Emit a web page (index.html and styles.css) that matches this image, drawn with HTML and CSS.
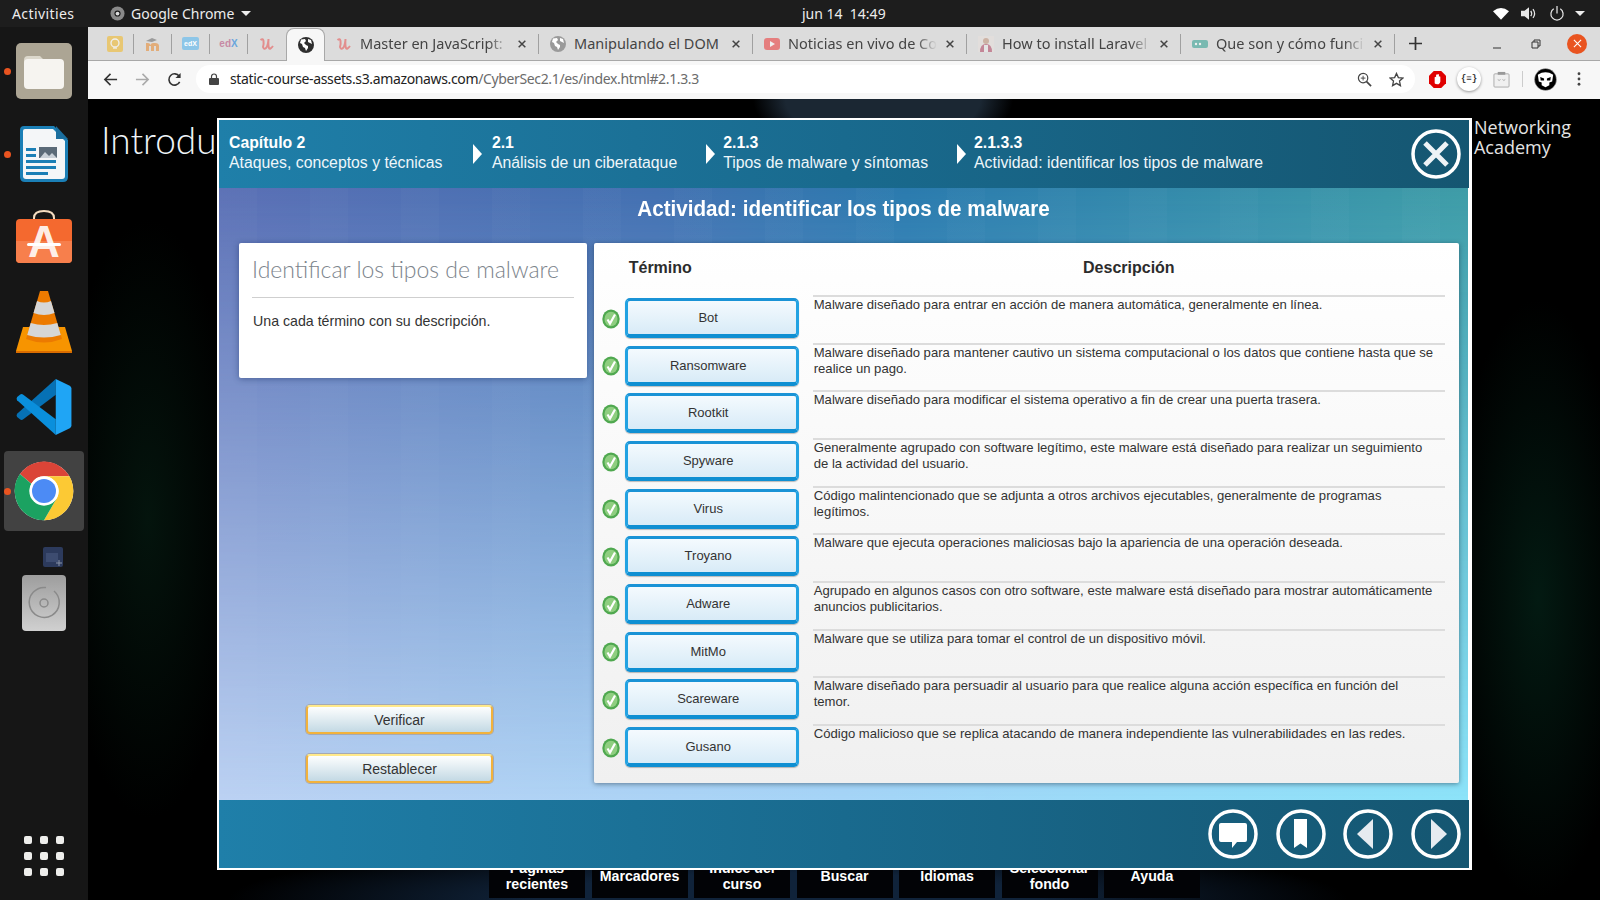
FILE: index.html
```html
<!DOCTYPE html>
<html lang="es">
<head>
<meta charset="utf-8">
<title>Actividad: identificar los tipos de malware</title>
<link rel="stylesheet" href="styles.css">
</head>
<body>
<svg class="defs" width="0" height="0" aria-hidden="true">
  <symbol id="globe" viewBox="0 0 16 16"><circle cx="8" cy="8" r="8" fill="currentColor"/><path d="M3 2.500 7 2l1 2-2 2 2 2 2 1v2l-2 3-1-3-2-1-1-3-2-1zM10 2l3 1 1 4-2-1-2-1z" fill="#fff"/></symbol>
  <symbol id="udemy" viewBox="0 0 16 16"><path d="M1.500 4Q4 2 4.500 5T4 11q1 3 3 1t2.500-9q-.5 7 .5 9t4-2" fill="none" stroke="#e8504f" stroke-width="2"/></symbol>
  <symbol id="x" viewBox="0 0 12 12"><path d="M2 2l8 8M10 2l-8 8" stroke="#444" stroke-width="1.800"/></symbol>
  <symbol id="check" viewBox="0 0 18 20"><ellipse cx="9" cy="10" rx="8.700" ry="9.600" fill="#4fa84f"/><ellipse cx="9" cy="10" rx="6.500" ry="7.300" fill="#8fce80"/><path d="M5.500 10.500l2.500 4 5-9" fill="none" stroke="#fff" stroke-width="2.200"/></symbol>
</svg>

<header class="topbar">
  <span class="activities">Activities</span>
  <span class="app-menu">
    <svg class="app-icon" viewBox="0 0 16 16"><circle cx="8" cy="8" r="7.500" fill="#8a8a8a"/><circle cx="8" cy="8" r="3.300" fill="#1d1d1d"/><circle cx="8" cy="8" r="2" fill="#ddd"/></svg>
    Google Chrome
    <span class="caret"></span>
  </span>
  <time class="clock">jun 14&nbsp; 14:49</time>
  <div class="tray">
    <svg class="tray-icon" viewBox="0 0 18 14"><path d="M0 4.500Q9-3 18 4.500L9 14z" fill="#fff"/></svg>
    <svg class="tray-icon" viewBox="0 0 18 16"><path d="M0 5h4l5-4v14l-5-4H0z" fill="#e8e8e8"/><path d="M11 5q2 3 0 6M13.500 3q3.500 5 0 10" fill="none" stroke="#e8e8e8" stroke-width="1.400"/></svg>
    <svg class="tray-icon" viewBox="0 0 16 16"><path d="M4.500 3a6.500 6.500 0 1 0 7 0M8 0v8" fill="none" stroke="#e8e8e8" stroke-width="1.300"/></svg>
    <span class="caret tray-caret"></span>
  </div>
</header>

<div class="desktop">
  <nav class="dock">
    <div class="dock-item"><span class="dot"></span>
      <svg class="dock-icon" viewBox="0 0 56 56"><rect width="56" height="56" rx="5" fill="#aca594"/><path d="M8 17q0-4 4-4h12l5 5h16v6H8z" fill="#dcd8cc"/><rect x="8" y="16" width="40" height="30" rx="4" fill="#f6f4f0"/></svg>
    </div>
    <div class="dock-item"><span class="dot"></span>
      <svg class="dock-icon" viewBox="0 0 56 56"><path d="M8 0h30l14 14v37q0 5-5 5H9q-5 0-5-5V4q0-4 4-4z" fill="#1b7fb6"/><path d="M9 3h28l12 12v35q0 3-3 3H10q-3 0-3-3V5q0-2 2-2z" fill="#f4f6f8"/><path d="M40 0l12 13H40z" fill="#1a6e9e"/><path d="M10 22h10v3H10zM10 28h10v3H10zM10 34h30v3H10zM10 40h30v3H10zM10 46h22v3H10z" fill="#1b7fb6"/><rect x="23" y="21" width="18" height="11" fill="#5a6a78"/><path d="M24 32l5-6 4 4 3-3 5 5z" fill="#c8d0d8"/></svg>
    </div>
    <div class="dock-item">
      <svg class="dock-icon" viewBox="0 0 56 56"><path d="M18 10V8q0-7 10-7t10 7v2" fill="none" stroke="#f3dcc0" stroke-width="2"/><rect y="9" width="56" height="44" rx="4" fill="#f4692f"/><path d="M0 31h56v18q0 4-4 4H4q-4 0-4-4z" fill="#f77f4c"/><text x="28" y="47" class="store-letter">A</text><rect x="11" y="33" width="34" height="3" rx="1.500" fill="#fff"/></svg>
    </div>
    <div class="dock-item">
      <svg class="dock-vlc" viewBox="0 0 56 62"><path d="M7 36H49L56 60H0Z" fill="#f79400"/><path d="M0 60h56v2H0z" fill="#d96c00"/><path d="M24 0h8L46 48q-18 7-36 0Z" fill="#ec7a00"/><path d="M21 10q7 3 14 0l3.500 12q-10.500 4-21 0ZM14.700 32q13.300 4 26.600 0l3.500 12q-16.800 5-33.600 0Z" fill="#d6d6d6"/></svg>
    </div>
    <div class="dock-item dock-vs">
      <svg class="dock-icon" viewBox="0 0 100 100"><path d="M71 0V28L13 72Q10 74 7 72L2 68Q0 65 2 62Z" fill="#0671b5"/><path d="M71 100V72L13 28Q10 26 7 28L2 32Q0 35 2 38Z" fill="#0a8fdc"/><path d="M71 0 96 12Q99 14 99 17V83Q99 86 96 88L71 100Z" fill="#1fa5f5"/></svg>
    </div>
    <div class="dock-item dock-active"><span class="dot"></span>
      <svg class="dock-chrome" viewBox="0 0 48 48"><circle cx="24" cy="24" r="22" fill="#fff"/><path d="M5.950 11.300A22 22 0 0 1 43.050 13H24A11 11 0 0 0 14.500 18.500Z" fill="#db4437"/><path d="M24 13H43.050A22 22 0 0 1 24 46L33.500 29.500A11 11 0 0 0 24 13Z" fill="#fcc934"/><path d="M14.500 18.500 5.950 11.300A22 22 0 0 0 24 46L33.500 29.500A11 11 0 0 1 14.500 18.500Z" fill="#1ba261"/><circle cx="24" cy="24" r="11" fill="#fff"/><circle cx="24" cy="24" r="9" fill="#4c8bf5"/></svg>
    </div>
    <div class="dock-mini"><svg class="mini-icon" viewBox="0 0 20 20"><rect width="20" height="20" rx="2" fill="#2c3a5c"/><path d="M3 6h12v9H3z" fill="#3d4c70"/><path d="M13 16h6M16 13v6" stroke="#8a94a8"/></svg></div>
    <div class="dock-disc"><svg class="disc-icon" viewBox="0 0 44 56"><defs><linearGradient id="discbg" x1="0" y1="0" x2="0" y2="1"><stop offset="0" stop-color="#9d9d9d"/><stop offset="1" stop-color="#d0d0d0"/></linearGradient></defs><rect width="44" height="56" rx="4" fill="url(#discbg)"/><path d="M32 16a15 15 0 1 1-8-3.500" fill="none" stroke="#8a8a8a" stroke-width="1.500"/><circle cx="22" cy="28" r="4" fill="none" stroke="#8a8a8a" stroke-width="1.500"/></svg></div>
    <div class="dock-grid">
      <i></i><i></i><i></i><i></i><i></i><i></i><i></i><i></i><i></i>
    </div>
  </nav>

  <main class="browser">
    <div class="tabstrip">
      <div class="pin"><span class="pin-inner"><svg class="fav fav-dim" viewBox="0 0 16 16"><rect width="16" height="16" rx="2" fill="#f2b71f"/><circle cx="8" cy="7" r="4" fill="none" stroke="#fff" stroke-width="1.300"/><path d="M6 12h4" stroke="#fff" stroke-width="1.300"/></svg></span></div>
      <div class="pin"><span class="pin-inner"><svg class="fav fav-dim" viewBox="0 0 16 16"><path d="M1 15V7h2q2 0 2.500 2Q6 7 8 7h2q4 0 4 3v5h-3v-5H9v5H6v-5H4v5z" fill="#e8872b"/><path d="M1 5l6-3 5 2-5 2z" fill="#666"/></svg></span></div>
      <div class="pin"><span class="pin-inner"><span class="fav-edx-bubble">edX</span></span></div>
      <div class="pin"><span class="pin-inner"><span class="fav-edx"><b class="edx-a">ed</b><b class="edx-b">X</b></span></span></div>
      <div class="pin pin-last"><svg class="fav fav-dim" viewBox="0 0 16 16"><use href="#udemy"/></svg></div>
      <div class="tab-active"><svg class="fav fav-active" viewBox="0 0 16 16"><use href="#globe"/></svg></div>
      <div class="tab"><span class="tab-inner"><svg class="fav fav-dim" viewBox="0 0 16 16"><use href="#udemy"/></svg><span class="tab-title">Master en JavaScript:</span><svg class="tab-close" viewBox="0 0 12 12"><use href="#x"/></svg></span></div>
      <div class="tab"><span class="tab-inner"><svg class="fav fav-grey" viewBox="0 0 16 16"><use href="#globe"/></svg><span class="tab-title tab-title-full">Manipulando el DOM</span><svg class="tab-close" viewBox="0 0 12 12"><use href="#x"/></svg></span></div>
      <div class="tab"><span class="tab-inner"><svg class="fav fav-dim" viewBox="0 0 16 16"><rect y="2" width="16" height="12" rx="3" fill="#ee3333"/><path d="M6 5l5 3-5 3z" fill="#fff"/></svg><span class="tab-title">Noticias en vivo de Co</span><svg class="tab-close" viewBox="0 0 12 12"><use href="#x"/></svg></span></div>
      <div class="tab"><span class="tab-inner"><svg class="fav fav-dim" viewBox="0 0 16 16"><rect width="16" height="16" fill="#e8e0dc"/><circle cx="8" cy="5" r="3" fill="#c09078"/><path d="M2 16q0-8 6-8t6 8z" fill="#b04060"/><path d="M6 16V9h4v7z" fill="#eee"/></svg><span class="tab-title">How to install Laravel</span><svg class="tab-close" viewBox="0 0 12 12"><use href="#x"/></svg></span></div>
      <div class="tab"><span class="tab-inner"><svg class="fav fav-dim" viewBox="0 0 16 16"><rect y="4" width="16" height="8" rx="2" fill="#2a9d8f"/><circle cx="4" cy="8" r="1.200" fill="#fff"/><circle cx="8" cy="8" r="1.200" fill="#fff"/></svg><span class="tab-title">Que son y cómo funci</span><svg class="tab-close" viewBox="0 0 12 12"><use href="#x"/></svg></span></div>
      <svg class="new-tab" viewBox="0 0 12 12"><path d="M6 0v12M0 6h12" stroke="#333" stroke-width="1.600"/></svg>
      <div class="win-controls">
        <svg class="win-icon" viewBox="0 0 10 10"><path d="M1 9h8" stroke="#333"/></svg>
        <svg class="win-icon" viewBox="0 0 10 10"><path d="M3 3V1h6v6H7M1 3h6v6H1z" fill="none" stroke="#333"/></svg>
        <span class="win-close"><svg class="win-x" viewBox="0 0 10 10"><path d="M1 1l8 8M9 1L1 9" stroke="#fff" stroke-width="1.200"/></svg></span>
      </div>
    </div>

    <div class="toolbar">
      <button class="tool"><svg class="tool-icon" viewBox="0 0 16 16"><path d="M15 8H2M8 2 2 8l6 6" fill="none" stroke="#333" stroke-width="1.700"/></svg></button>
      <button class="tool"><svg class="tool-icon" viewBox="0 0 16 16"><path d="M1 8h13M8 2l6 6-6 6" fill="none" stroke="#aaa" stroke-width="1.700"/></svg></button>
      <button class="tool"><svg class="tool-icon" viewBox="0 0 16 16"><path d="M13.500 10.500A6 6 0 1 1 13 4.500" fill="none" stroke="#333" stroke-width="1.700"/><path d="M14.500 1v5.500H9z" fill="#333"/></svg></button>
      <div class="omnibox">
        <svg class="lock" viewBox="0 0 10 12"><path d="M2.500 5V3.500a2.500 2.500 0 0 1 5 0V5" fill="none" stroke="#444" stroke-width="1.200"/><rect y="5" width="10" height="7" rx="1" fill="#444"/></svg>
        <span class="url"><span class="url-host">static-course-assets.s3.amazonaws.com</span>/CyberSec2.1/es/index.html#2.1.3.3</span>
        <svg class="omni-icon" viewBox="0 0 16 16"><circle cx="6.500" cy="6.500" r="5" fill="none" stroke="#444" stroke-width="1.300"/><path d="M10 10l5 5" stroke="#444" stroke-width="1.800"/><path d="M6.500 4v5M4 6.500h5" stroke="#444"/></svg>
        <svg class="omni-icon" viewBox="0 0 16 16"><path d="M8 1.500l2 4.500 4.800.5-3.600 3.200 1 4.800L8 12.100 3.800 14.500l1-4.800L1.200 6.500 6 6z" fill="none" stroke="#444" stroke-width="1.400"/></svg>
      </div>
      <div class="ext"><svg class="ext-icon" viewBox="0 0 18 18"><path d="M5 0h8l5 5v8l-5 5H5l-5-5V5z" fill="#e00000"/><path d="M6 13V6.500a1 1 0 0 1 1.500 0V4a1 1 0 0 1 1.500 0v-.5a1 1 0 0 1 1.500.5v2a1 1 0 0 1 1.500 0v5q-.5 3-3 3T6 13z" fill="#fff"/></svg></div>
      <div class="ext"><span class="ext-bubble">{≡}</span></div>
      <div class="ext"><svg class="ext-icon" viewBox="0 0 18 18"><rect x="1" y="3" width="16" height="14" rx="1" fill="#f0f0f0" stroke="#aaa"/><rect x="5" y="1" width="8" height="3" fill="#999"/><path d="M5 9l1.500 1L8 9M10 9l1.500 1L13 9" fill="none" stroke="#999" stroke-width=".8"/></svg></div>
      <span class="tool-sep"></span>
      <div class="ext"><svg class="avatar" viewBox="0 0 24 24"><circle cx="12" cy="12" r="11.500" fill="#000" stroke="#ccc" stroke-width=".5"/><path d="M4 7q8-5 16 0l-1 7-3 1v3l-4 2-4-2v-3l-3-1z" fill="#fff"/><path d="M6.500 9.500l4 1.500v2H7zM17.500 9.500l-4 1.500v2H17z" fill="#000"/></svg></div>
      <div class="ext"><svg class="dots" viewBox="0 0 4 16"><circle cx="2" cy="2" r="1.600" fill="#444"/><circle cx="2" cy="8" r="1.600" fill="#444"/><circle cx="2" cy="14" r="1.600" fill="#444"/></svg></div>
    </div>

    <section class="page">
      <div class="page-head">
        <h1 class="page-title">Introducción</h1>
        <p class="brand">Networking<br>Academy</p>
      </div>
      <div class="course-nav">
        <a class="course-link">Páginas recientes</a>
        <a class="course-link">Marcadores</a>
        <a class="course-link">Índice del curso</a>
        <a class="course-link">Buscar</a>
        <a class="course-link">Idiomas</a>
        <a class="course-link">Seleccionar fondo</a>
        <a class="course-link">Ayuda</a>
      </div>

      <div class="sim">
        <div class="sim-head">
          <div class="crumb"><b>Capítulo 2</b><span>Ataques, conceptos y técnicas</span></div>
          <i class="crumb-arrow"></i>
          <div class="crumb"><b>2.1</b><span>Análisis de un ciberataque</span></div>
          <i class="crumb-arrow"></i>
          <div class="crumb"><b>2.1.3</b><span>Tipos de malware y síntomas</span></div>
          <i class="crumb-arrow"></i>
          <div class="crumb"><b>2.1.3.3</b><span>Actividad: identificar los tipos de malware</span></div>
          <svg class="round-btn close-btn" viewBox="0 0 50 50"><circle cx="25" cy="25" r="23" fill="none" stroke="#fff" stroke-width="3.500"/><path d="M14 14l22 22M36 14 14 36" stroke="#eef3f6" stroke-width="5"/></svg>
        </div>

        <div class="sim-body">
          <h2 class="sim-title">Actividad: identificar los tipos de malware</h2>
          <div class="sim-main">
            <div class="side">
              <div class="intro">
                <h3 class="intro-title">Identificar los tipos de malware</h3>
                <p class="intro-text">Una cada término con su descripción.</p>
              </div>
              <div class="actions">
                <button class="action">Verificar</button>
                <button class="action">Restablecer</button>
              </div>
            </div>
            <div class="match">
              <div class="match-head"><span class="head-term">Término</span><span class="head-desc">Descripción</span></div>
              <div class="row"><svg class="ok" viewBox="0 0 18 20"><use href="#check"/></svg><div class="term">Bot</div><p class="desc">Malware diseñado para entrar en acción de manera automática, generalmente en línea.</p></div>
              <div class="row"><svg class="ok" viewBox="0 0 18 20"><use href="#check"/></svg><div class="term">Ransomware</div><p class="desc">Malware diseñado para mantener cautivo un sistema computacional o los datos que contiene hasta que se realice un pago.</p></div>
              <div class="row"><svg class="ok" viewBox="0 0 18 20"><use href="#check"/></svg><div class="term">Rootkit</div><p class="desc">Malware diseñado para modificar el sistema operativo a fin de crear una puerta trasera.</p></div>
              <div class="row"><svg class="ok" viewBox="0 0 18 20"><use href="#check"/></svg><div class="term">Spyware</div><p class="desc">Generalmente agrupado con software legítimo, este malware está diseñado para realizar un seguimiento de la actividad del usuario.</p></div>
              <div class="row"><svg class="ok" viewBox="0 0 18 20"><use href="#check"/></svg><div class="term">Virus</div><p class="desc">Código malintencionado que se adjunta a otros archivos ejecutables, generalmente de programas legítimos.</p></div>
              <div class="row"><svg class="ok" viewBox="0 0 18 20"><use href="#check"/></svg><div class="term">Troyano</div><p class="desc">Malware que ejecuta operaciones maliciosas bajo la apariencia de una operación deseada.</p></div>
              <div class="row"><svg class="ok" viewBox="0 0 18 20"><use href="#check"/></svg><div class="term">Adware</div><p class="desc">Agrupado en algunos casos con otro software, este malware está diseñado para mostrar automáticamente anuncios publicitarios.</p></div>
              <div class="row"><svg class="ok" viewBox="0 0 18 20"><use href="#check"/></svg><div class="term">MitMo</div><p class="desc">Malware que se utiliza para tomar el control de un dispositivo móvil.</p></div>
              <div class="row"><svg class="ok" viewBox="0 0 18 20"><use href="#check"/></svg><div class="term">Scareware</div><p class="desc">Malware diseñado para persuadir al usuario para que realice alguna acción específica en función del temor.</p></div>
              <div class="row"><svg class="ok" viewBox="0 0 18 20"><use href="#check"/></svg><div class="term">Gusano</div><p class="desc">Código malicioso que se replica atacando de manera independiente las vulnerabilidades en las redes.</p></div>
            </div>
          </div>
        </div>

        <div class="sim-foot">
          <svg class="round-btn" viewBox="0 0 50 50"><circle cx="25" cy="25" r="23" fill="none" stroke="#fff" stroke-width="3.500"/><path d="M13 14h24q2 0 2 2v15q0 2-2 2h-8l-5 6v-6H13q-2 0-2-2V16q0-2 2-2z" fill="#fff"/></svg>
          <svg class="round-btn" viewBox="0 0 50 50"><circle cx="25" cy="25" r="23" fill="none" stroke="#fff" stroke-width="3.500"/><path d="M18 10h13v29l-6.500-4.500L18 39z" fill="#fff"/></svg>
          <svg class="round-btn" viewBox="0 0 50 50"><circle cx="25" cy="25" r="23" fill="none" stroke="#fff" stroke-width="3.500"/><path d="M30 10v30L14 25z" fill="#e6ebf0"/></svg>
          <svg class="round-btn" viewBox="0 0 50 50"><circle cx="25" cy="25" r="23" fill="none" stroke="#fff" stroke-width="3.500"/><path d="M20 10v30l16-15z" fill="#e6ebf0"/></svg>
        </div>
      </div>
    </section>
  </main>
</div>
</body>
</html>
```

FILE: styles.css
```css
* { box-sizing: border-box; }
html, body { margin: 0; height: 100%; }
body {
  width: 1600px;
  height: 900px;
  overflow: hidden;
  display: flex;
  flex-direction: column;
  background: #000;
  font-family: "Liberation Sans", Arial, sans-serif;
}
.defs { position: absolute; }

/* GNOME top bar */
.topbar {
  height: 27px;
  flex: none;
  display: flex;
  align-items: center;
  background: #1d1d1d;
  color: #ececec;
  font: 14px "Noto Sans", sans-serif;
  padding-left: 12px;
  position: relative;
}
.activities { width: 98px; letter-spacing: .4px; }
.app-menu { display: flex; align-items: center; gap: 6px; }
.app-icon { width: 15px; height: 15px; }
.caret {
  width: 0;
  height: 0;
  border-left: 5px solid transparent;
  border-right: 5px solid transparent;
  border-top: 5px solid #ececec;
  margin-left: 1px;
}
.clock { position: absolute; left: 802px; top: 4px; }
.tray { margin-left: auto; display: flex; align-items: center; gap: 12px; padding-right: 15px; }
.tray-icon { width: 16px; height: 15px; }
.tray-caret { margin-left: -2px; }

.desktop { flex: 1; display: flex; min-height: 0; }

/* Dock */
.dock {
  width: 88px;
  flex: none;
  background: #161616;
  display: flex;
  flex-direction: column;
  align-items: center;
  padding: 2px 0 24px;
}
.dock-item {
  height: 83.600px;
  width: 88px;
  display: flex;
  align-items: center;
  justify-content: center;
  position: relative;
  flex: none;
}
.dock-icon { width: 56px; height: 56px; }
.dock-vlc { width: 56px; height: 62px; }
.dock-vs { padding-top: 4px; }
.store-letter {
  font: bold 44px "Liberation Sans", sans-serif;
  fill: #fff;
  fill-opacity: .9;
  text-anchor: middle;
}
.dot {
  position: absolute;
  left: 4px;
  top: 50%;
  width: 7px;
  height: 7px;
  margin-top: -3px;
  border-radius: 50%;
  background: #e95420;
}
.dock-active { margin-top: 2px; }
.dock-active::before {
  content: "";
  position: absolute;
  left: 4px;
  right: 4px;
  top: 2px;
  bottom: 2px;
  border-radius: 4px;
  background: #424242;
}
.dock-chrome { width: 64px; height: 64px; position: relative; }
.dock-active .dot { z-index: 1; }
.dock-mini { margin-top: 14px; height: 20px; padding-left: 18px; }
.mini-icon { width: 20px; height: 20px; display: block; }
.dock-disc { margin-top: 8px; height: 56px; }
.disc-icon { width: 44px; height: 56px; display: block; }
.dock-grid {
  margin-top: auto;
  display: grid;
  grid-template-columns: repeat(3, 8px);
  grid-auto-rows: 8px;
  gap: 8px;
}
.dock-grid i { background: #eeeeec; border-radius: 2px; }

/* Chrome */
.browser { flex: 1; display: flex; flex-direction: column; min-width: 0; }
.tabstrip {
  height: 34px;
  flex: none;
  background: #dcdcdc;
  border-bottom: 1px solid #a8a8a8;
  display: flex;
  align-items: center;
  padding-left: 8px;
  font: 14.500px "Noto Sans", sans-serif;
  color: #444;
}
.pin { width: 38px; height: 33px; display: flex; align-items: center; }
.pin-inner {
  width: 38px;
  height: 20px;
  border-right: 1px solid #a0a0a0;
  display: flex;
  align-items: center;
  justify-content: center;
}
.pin-last { justify-content: center; }
.fav { width: 16px; height: 16px; flex: none; }
.fav-dim { opacity: .55; }
.fav-grey { color: #9a9a9a; }
.fav-active { color: #2e2e2e; }
.fav-edx-bubble {
  background: #8dc6e8;
  color: #fff;
  font: bold 7px "Liberation Sans", sans-serif;
  padding: 3px 2px;
  border-radius: 2px;
}
.fav-edx { font: bold 10px "Liberation Sans", sans-serif; }
.edx-a { color: #c78aa5; }
.edx-b { color: #6aa6dc; }
.tab-active {
  width: 39px;
  height: 33px;
  margin-top: 1px;
  background: #f7f7f7;
  border: 1px solid #a8a8a8;
  border-bottom: 0;
  border-radius: 8px 8px 0 0;
  display: flex;
  align-items: center;
  justify-content: center;
}
.tab { width: 214px; height: 33px; display: flex; align-items: center; flex: none; }
.tab-inner {
  flex: 1;
  height: 20px;
  display: flex;
  align-items: center;
  gap: 8px;
  padding: 0 11px 0 11px;
  border-right: 1px solid #a0a0a0;
  min-width: 0;
}
.tab-title {
  flex: 1;
  white-space: nowrap;
  overflow: hidden;
  line-height: 20px;
  margin-top: -2px;
  -webkit-mask-image: linear-gradient(90deg, #000 86%, transparent);
  mask-image: linear-gradient(90deg, #000 86%, transparent);
}
.tab-title-full { -webkit-mask-image: none; mask-image: none; }
.tab-close { width: 10px; height: 10px; flex: none; }
.new-tab { width: 13px; height: 13px; margin-left: 14px; }
.win-controls { margin-left: auto; display: flex; align-items: center; gap: 26px; padding-right: 13px; }
.win-icon { width: 10px; height: 10px; }
.win-icon:first-child { margin-right: 3px; }
.win-close {
  width: 20px;
  height: 20px;
  border-radius: 50%;
  background: #e95420;
  display: flex;
  align-items: center;
  justify-content: center;
}
.win-x { width: 9px; height: 9px; }

.toolbar {
  height: 38px;
  flex: none;
  background: #f7f7f7;
  display: flex;
  align-items: center;
  padding: 0 0 2px 6px;
}
.tool {
  width: 32px;
  height: 28px;
  border: 0;
  padding: 0;
  background: none;
  display: flex;
  align-items: center;
  justify-content: center;
}
.tool-icon { width: 15px; height: 15px; }
.omnibox {
  width: 1219px;
  height: 28px;
  margin: 0 6px;
  background: #fff;
  border-radius: 14px;
  display: flex;
  align-items: center;
  padding: 0 11px 0 13px;
}
.lock { width: 10px; height: 12px; flex: none; }
.url {
  margin-left: 11px;
  flex: 1;
  font: 14px "Noto Sans", sans-serif;
  letter-spacing: -.36px;
  color: #6b6b6b;
  white-space: nowrap;
  padding-bottom: 2px;
}
.url-host { color: #222; }
.omni-icon { width: 15px; height: 15px; margin-left: 17px; }
.ext { width: 32px; height: 32px; flex: none; display: flex; align-items: center; justify-content: center; }
.ext-icon { width: 17px; height: 17px; }
.ext-bubble {
  width: 24px;
  height: 24px;
  border-radius: 50%;
  background: #fff;
  box-shadow: 0 1px 3px rgba(0,0,0,.4);
  font: 9px "Liberation Mono", monospace;
  font-weight: bold;
  color: #333;
  text-align: center;
  line-height: 24px;
}
.tool-sep { width: 1px; height: 16px; background: #ccc; margin: 0 6px 0 5px; }
.avatar { width: 23px; height: 23px; }
.dots { width: 4px; height: 14px; margin-left: 4px; }

/* Page behind the dialog */
.page {
  flex: 1;
  position: relative;
  overflow: hidden;
  display: flex;
  flex-direction: column;
  justify-content: space-between;
  padding-bottom: 2px;
  background:
    radial-gradient(ellipse 130px 60px at 795px 0, #1b2733 75%, transparent 100%),
    radial-gradient(ellipse 560px 60px at 700px 801px, #10233a 45%, transparent 100%),
    radial-gradient(ellipse 90px 300px at 60px 420px, #04140d, transparent),
    radial-gradient(ellipse 90px 300px at 1450px 500px, #031a12, transparent),
    #000;
}
.page-head { display: flex; justify-content: space-between; padding: 18px 29px 0 13px; color: #fff; }
.page-title { margin: 0; font: 300 37px Lato, sans-serif; line-height: 46px; color: #eef4f8; }
.brand { margin: 0; font: 18px/20px "Open Sans", sans-serif; color: #e4e4e4; }
.course-nav { display: flex; gap: 6.500px; padding-left: 401px; }
.course-link {
  width: 96px;
  height: 44px;
  background: #020306;
  color: #fff;
  font: bold 14.200px/16px "Liberation Sans", sans-serif;
  text-align: center;
  display: flex;
  align-items: center;
  justify-content: center;
}

/* Dialog */
.sim {
  position: absolute;
  left: 129px;
  top: 19px;
  width: 1255px;
  height: 752px;
  border: solid #fff;
  border-width: 2px 3px 2px 2px;
  display: flex;
  flex-direction: column;
}
.sim-head, .sim-foot {
  height: 68px;
  flex: none;
  background: linear-gradient(90deg, #1f7fa9, #196a8e 50%, #155671);
  display: flex;
  align-items: center;
  color: #fff;
}
.sim-head { padding-left: 10px; }
.crumb { display: flex; flex-direction: column; font-size: 15.800px; line-height: 20px; padding-bottom: 2px; }
.crumb b { font-weight: bold; }
.crumb span { color: #eef6fa; }
.crumb-arrow {
  width: 0;
  height: 0;
  margin: 0 8.500px 0 28.500px;
  border-top: 10px solid transparent;
  border-bottom: 10px solid transparent;
  border-left: 9px solid #fff;
}
.crumb-arrow:first-of-type { margin: 0 9.500px 0 31px; }
.round-btn { width: 50px; height: 50px; flex: none; }
.close-btn { margin-left: auto; margin-right: 8px; }
.sim-foot { justify-content: flex-end; gap: 18px; padding-right: 8px; }
.sim-foot .round-btn:nth-child(2) { margin-right: -1px; }

.sim-body {
  flex: 1;
  position: relative;
  display: flex;
  flex-direction: column;
  border-right: 1px solid #fff;
  background: linear-gradient(90deg, #bcd2f3, #a6d5f7 50%, #8de3f9);
  min-height: 0;
}
.sim-body::before {
  content: "";
  position: absolute;
  inset: 0;
  background:
    repeating-linear-gradient(90deg, rgba(255,255,255,.02) 0 38px, transparent 38px 91px),
    linear-gradient(90deg, #5a6fb5, #4270b1 35%, #2a7aae 55%, #3e9ca7);
  -webkit-mask-image: linear-gradient(#000, transparent);
  mask-image: linear-gradient(#000, transparent);
}
.sim-title {
  position: relative;
  height: 55px;
  margin: 0;
  padding-top: 7px;
  text-align: center;
  color: #fff;
  font-size: 22px;
  line-height: 28px;
  font-weight: bold;
  transform: scaleX(.937);
}
.sim-main { position: relative; flex: 1; display: flex; gap: 7px; min-height: 0; padding: 0 9px 17px 20px; }
.side { width: 348px; display: flex; flex-direction: column; }
.intro {
  height: 135px;
  padding: 10px 13px 0;
  background: #fff;
  border-radius: 2px;
  box-shadow: 0 1px 6px rgba(20,40,90,.45);
}
.intro-title {
  margin: 0;
  padding-bottom: 12px;
  border-bottom: 1px solid #cfcfcf;
  font: 300 23px/32px Lato, sans-serif;
  color: #7c848c;
}
.intro-text { margin: 15px 0 0 1px; font-size: 14.200px; line-height: 16px; color: #333; }
.actions { margin-top: auto; padding-left: 67px; display: flex; flex-direction: column; gap: 20px; }
.action {
  width: 187px;
  height: 29px;
  padding: 0;
  border: 2px solid #f2b23c;
  border-top-color: #ffe98a;
  border-radius: 4px;
  box-shadow: 0 0 0 1px #a5a9b2;
  background: linear-gradient(#fdfefe, #c3d9e4);
  font: 14px "Liberation Sans", sans-serif;
  color: #333;
}
.match {
  width: 866px;
  padding: 0 14px 0 8px;
  background: linear-gradient(#fff, #f0f0f0);
  border-radius: 2px;
  box-shadow: 0 1px 5px rgba(20,40,60,.5);
}
.match-head {
  height: 52px;
  display: grid;
  grid-template-columns: 211px 1fr;
  align-items: center;
  font-weight: bold;
  font-size: 16px;
  color: #2c2c2c;
  padding-bottom: 3px;
}
.head-term { padding-left: 27px; }
.head-desc { text-align: center; }
.row {
  height: 47.670px;
  display: grid;
  grid-template-columns: 18px 174px 1fr;
  column-gap: 5px;
}
.row .desc { margin-left: 9px; }
.ok { width: 18px; height: 20px; align-self: center; }
.term {
  height: 40px;
  margin-top: 3px;
  padding-right: 7px;
  border: 3px solid #22a2e2;
  border-bottom: 4px solid #0f8fd2;
  border-top-color: #1a93d6;
  border-radius: 5px;
  background: linear-gradient(#f4fafe, #d8ebf7);
  box-shadow: 0 1px 1px rgba(0,0,0,.25);
  display: flex;
  align-items: center;
  justify-content: center;
  font-size: 13px;
  color: #333;
}
.desc {
  margin: 0;
  border-top: 2px solid #dcdcdc;
  padding: 0 8px 0 1px;
  font-size: 13.100px;
  line-height: 16px;
  color: #333;
}
```
